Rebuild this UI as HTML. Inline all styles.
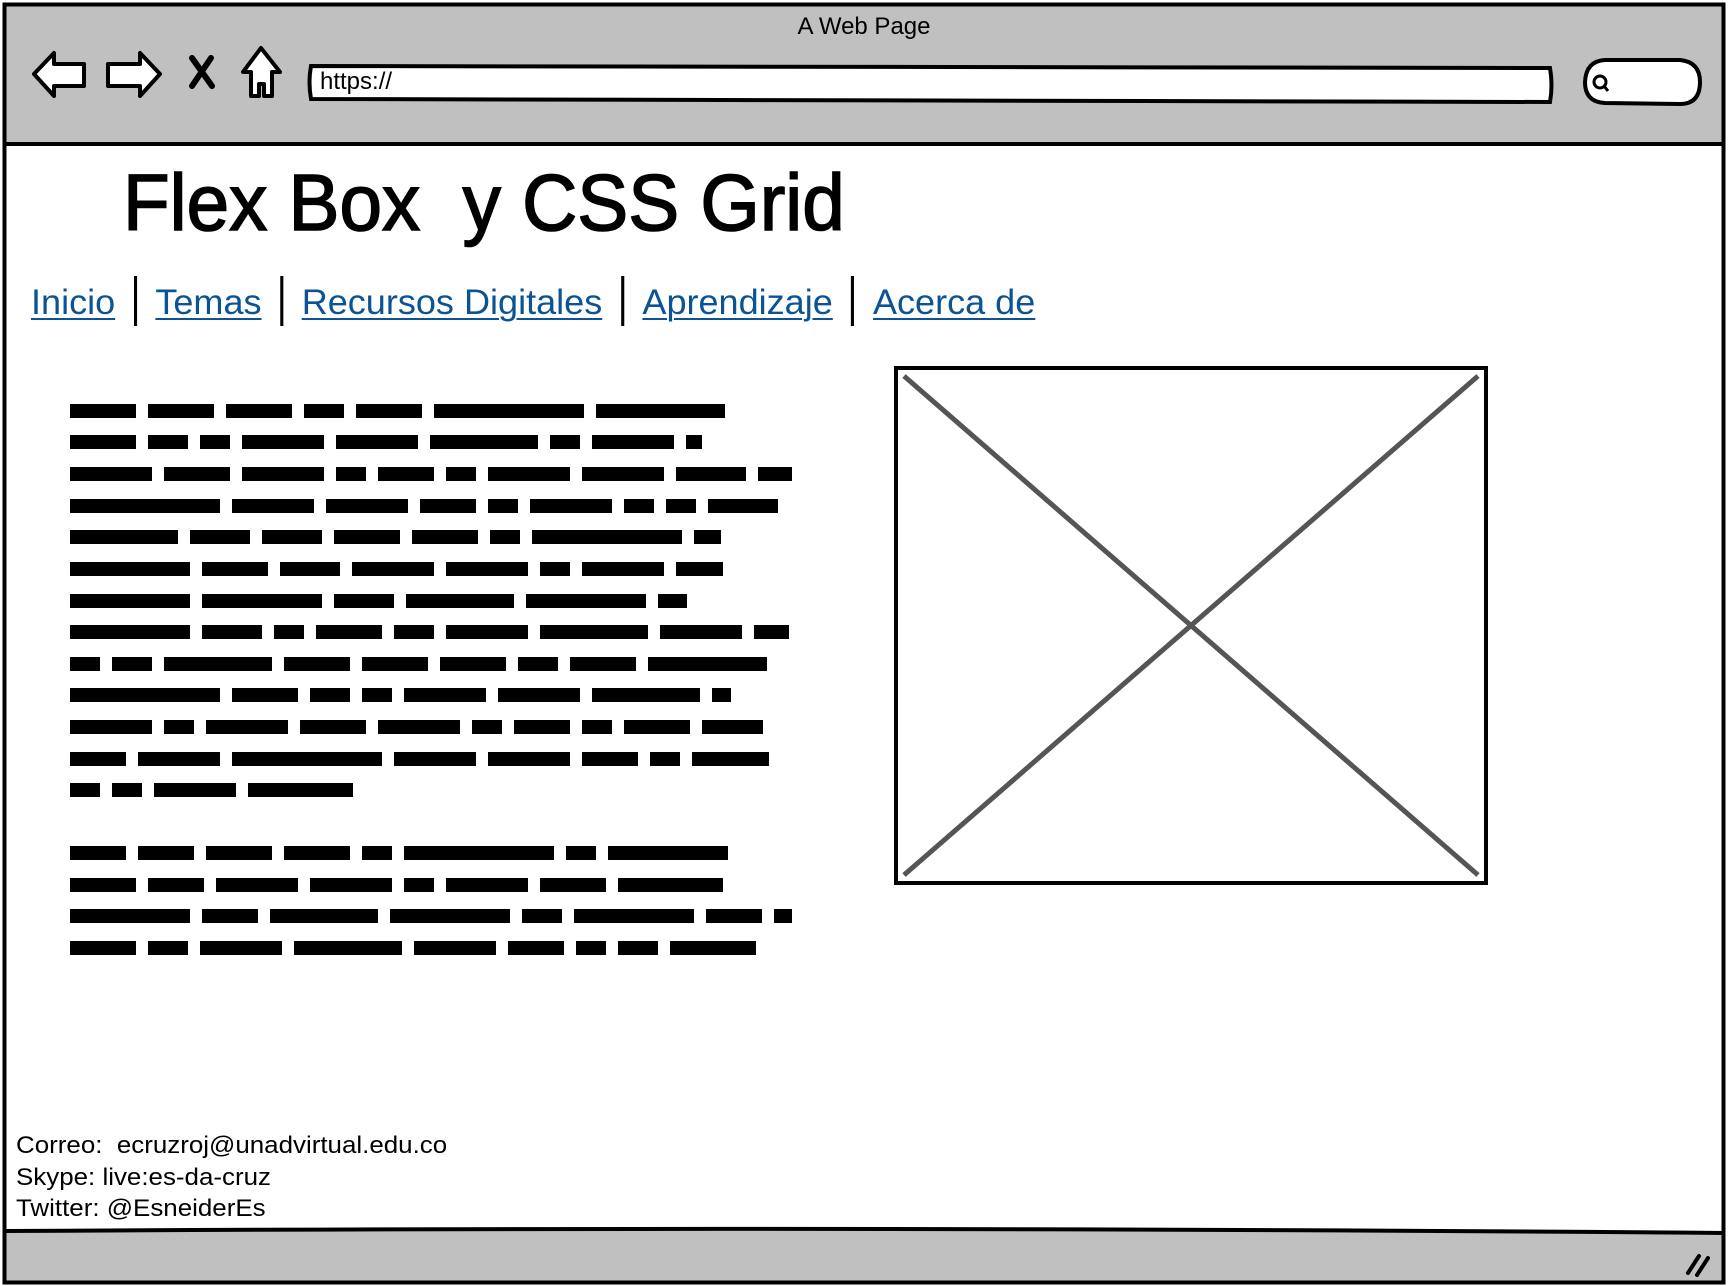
<!DOCTYPE html>
<html><head><meta charset="utf-8"><style>
html,body{margin:0;padding:0;background:#fff;}
body{width:1728px;height:1286px;position:relative;overflow:hidden;font-family:"Liberation Sans",sans-serif;}
.a{position:absolute;}
.title{left:123px;top:153px;font-size:80px;line-height:100px;white-space:nowrap;transform:scaleX(0.955);transform-origin:left top;color:#000;-webkit-text-stroke:1.6px #000;}
.nav{left:31px;top:276px;font-size:35px;line-height:44px;white-space:nowrap;transform:scaleX(1.03);transform-origin:left top;}
.nav a{color:#0b5394;text-decoration:underline;text-decoration-thickness:2px;text-underline-offset:4px;}
.sep{display:inline-block;width:3px;height:50px;background:#000;vertical-align:-12px;margin:0 18px;}
.foot{left:16px;top:1130px;font-size:24px;line-height:31.5px;color:#000;white-space:nowrap;transform:scaleX(1.08);transform-origin:left top;}
</style></head><body>
<svg class="a" style="left:0;top:0" width="1728" height="1286" viewBox="0 0 1728 1286">
 <rect x="3" y="3" width="1721" height="141" fill="#c0c0c0"/>
 <rect x="3" y="1231" width="1721" height="52" fill="#c0c0c0"/>
 <rect x="4.5" y="4.5" width="1719" height="1278" fill="none" stroke="#000" stroke-width="4"/>
 <line x1="3" y1="144" x2="1725" y2="144" stroke="#000" stroke-width="4"/>
 <path d="M3 1231 Q860 1226 1725 1233" fill="none" stroke="#000" stroke-width="4"/>
 <path d="M311 66 L1550 68 Q1553 85 1550 102 L311 99 Q308 82 311 66Z" fill="#fff" stroke="#000" stroke-width="4"/>
 <path d="M1605 60 L1680 60 Q1700 62 1700 82 Q1700 104 1680 104 L1605 103 Q1585 102 1585 82 Q1586 61 1605 60Z" fill="#fff" stroke="#000" stroke-width="4"/>
 <circle cx="1600" cy="82" r="6" fill="none" stroke="#000" stroke-width="3"/>
 <line x1="1604" y1="86" x2="1608" y2="91" stroke="#000" stroke-width="3"/>
 <path d="M34 74 L54 53 L54 64 L84 64 L84 86 L54 86 L54 96 Z" fill="#fff" stroke="#000" stroke-width="4" stroke-linejoin="round"/>
 <path d="M160 74 L140 53 L140 64 L108 64 L108 86 L140 86 L140 96 Z" fill="#fff" stroke="#000" stroke-width="4" stroke-linejoin="round"/>
 <path d="M192 58 L212 86 M211 58 L192 86" stroke="#000" stroke-width="6" stroke-linecap="round"/>
 <path d="M261 48 L243 72 L251 72 L251 96 L259 96 L259 84 L264 84 L264 96 L272 96 L272 72 L280 72 Z" fill="#fff" stroke="#000" stroke-width="4" stroke-linejoin="round"/>
 <path d="M1688 1273 L1699 1256 M1697 1275 L1708 1258" stroke="#000" stroke-width="4" stroke-linecap="round"/>
 <rect x="896" y="368" width="590" height="515" fill="#fff" stroke="#000" stroke-width="4"/>
 <path d="M904 376 L1478 875 M1478 376 L904 875" stroke="#555" stroke-width="5"/>
 <g stroke="#000" stroke-width="14" fill="none">
  <line x1="70" y1="411" x2="725" y2="411" stroke-dasharray="66 12 66 12 66 12 40 12 66 12 150 12 160 400"/>
  <line x1="70" y1="442" x2="702" y2="442" stroke-dasharray="66 12 40 12 30 12 82 12 82 12 108 12 30 12 82 12 30 400"/>
  <line x1="70" y1="474" x2="792" y2="474" stroke-dasharray="82 12 66 12 82 12 30 12 56 12 30 12 82 12 82 12 70 12 82 400"/>
  <line x1="70" y1="506" x2="778" y2="506" stroke-dasharray="150 12 82 12 82 12 56 12 30 12 82 12 30 12 30 12 82 400"/>
  <line x1="70" y1="537" x2="721" y2="537" stroke-dasharray="108 12 60 12 60 12 66 12 66 12 30 12 150 12 30 400"/>
  <line x1="70" y1="569" x2="723" y2="569" stroke-dasharray="120 12 66 12 60 12 82 12 82 12 30 12 82 12 66 400"/>
  <line x1="70" y1="601" x2="687" y2="601" stroke-dasharray="120 12 120 12 60 12 108 12 120 12 40 400"/>
  <line x1="70" y1="632" x2="789" y2="632" stroke-dasharray="120 12 60 12 30 12 66 12 40 12 82 12 108 12 82 12 60 400"/>
  <line x1="70" y1="664" x2="767" y2="664" stroke-dasharray="30 12 40 12 108 12 66 12 66 12 66 12 40 12 66 12 150 400"/>
  <line x1="70" y1="695" x2="731" y2="695" stroke-dasharray="150 12 66 12 40 12 30 12 82 12 82 12 108 12 30 400"/>
  <line x1="70" y1="727" x2="763" y2="727" stroke-dasharray="82 12 30 12 82 12 66 12 82 12 30 12 56 12 30 12 66 12 82 400"/>
  <line x1="70" y1="759" x2="769" y2="759" stroke-dasharray="56 12 82 12 150 12 82 12 82 12 56 12 30 12 82 400"/>
  <line x1="70" y1="790" x2="353" y2="790" stroke-dasharray="30 12 30 12 82 12 108 400"/>
  <line x1="70" y1="853" x2="729" y2="853" stroke-dasharray="56 12 56 12 66 12 66 12 30 12 150 12 30 12 120 400"/>
  <line x1="70" y1="885" x2="723" y2="885" stroke-dasharray="66 12 56 12 82 12 82 12 30 12 82 12 66 12 120 400"/>
  <line x1="70" y1="916" x2="792" y2="916" stroke-dasharray="120 12 56 12 108 12 120 12 40 12 120 12 56 12 30 400"/>
  <line x1="70" y1="948" x2="756" y2="948" stroke-dasharray="66 12 40 12 82 12 108 12 82 12 56 12 30 12 40 12 108 400"/>
 </g>
</svg>
<div class="a" style="left:0;width:1728px;top:13px;text-align:center;font-size:24px;">A Web Page</div>
<div class="a" style="left:320px;top:68px;font-size:24px;">https://</div>
<div class="a title">Flex Box&nbsp; y CSS Grid</div>
<div class="a nav"><a>Inicio</a><span class="sep"></span><a>Temas</a><span class="sep"></span><a>Recursos Digitales</a><span class="sep"></span><a>Aprendizaje</a><span class="sep"></span><a>Acerca de</a></div>
<div class="a foot">Correo:&nbsp; ecruzroj@unadvirtual.edu.co<br>Skype: live:es-da-cruz<br>Twitter: @EsneiderEs</div>
</body></html>
